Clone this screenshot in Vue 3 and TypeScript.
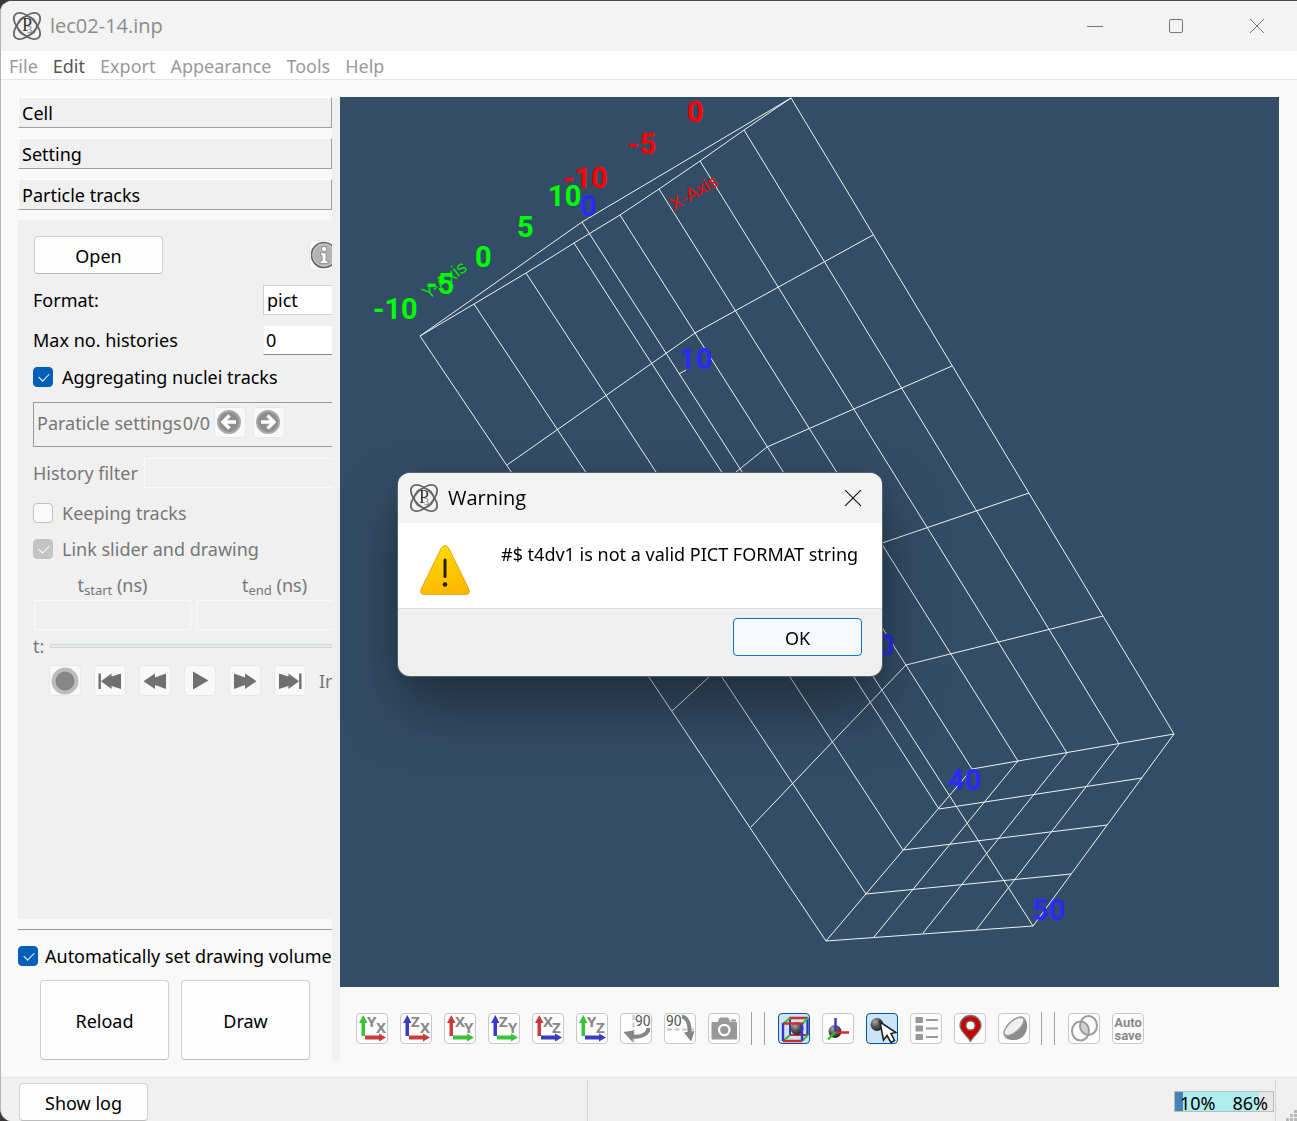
<script setup lang="ts">
import { ref } from 'vue'

interface AxisView { up: string; right: string }
interface Label { text: string; x: number; y: number; kind: 'x' | 'y' | 'z' }

const colors: Record<string, string> = { X: '#c83c3c', Y: '#38c438', Z: '#3a3ac4' }

const menus = ['File', 'Edit', 'Export', 'Appearance', 'Tools', 'Help']
const sections = ['Cell', 'Setting', 'Particle tracks']

const axisViews: AxisView[] = [
  { up: 'Y', right: 'X' },
  { up: 'Z', right: 'X' },
  { up: 'X', right: 'Y' },
  { up: 'Z', right: 'Y' },
  { up: 'X', right: 'Z' },
  { up: 'Y', right: 'Z' },
]

const wireframe: string[] = [
  'M791 98L582 222L420 336',
  'M791 98L744 130L700 161L659 189L620 215L574 243L526 273L474 304L420 336',
  'M791 98L1174 734',
  'M744 130L1119 744',
  'M700 161L1067 753',
  'M659 189L1018 761',
  'M620 215L972 769',
  'M574 243L939 809',
  'M526 273L903 850',
  'M474 304L866 894',
  'M420 336L826 941',
  'M582 222L1033 926',
  'M873 235L695 333L507 465',
  'M952 366L767 447L590 590',
  'M1029 493L838 558L672 711',
  'M1103 616L906 665L751 827',
  'M972 769L1174 734L1033 926L826 941Z',
  'M939 809L1142 778',
  'M903 850L1107 825',
  'M866 894L1071 874',
  'M1018 761L874 937',
  'M1067 753L923 933',
  'M1119 744L976 930',
  'M679 374L686 370',
]

const labels: Label[] = [
  { text: '0', x: 687, y: 122, kind: 'x' },
  { text: '-5', x: 628, y: 154, kind: 'x' },
  { text: '-10', x: 563, y: 188, kind: 'x' },
  { text: '10', x: 548, y: 206, kind: 'y' },
  { text: '5', x: 517, y: 237, kind: 'y' },
  { text: '0', x: 475, y: 267, kind: 'y' },
  { text: '-5', x: 426, y: 294, kind: 'y' },
  { text: '-10', x: 373, y: 319, kind: 'y' },
  { text: '0', x: 580, y: 216, kind: 'z' },
  { text: '10', x: 679, y: 369, kind: 'z' },
  { text: '30', x: 861, y: 655, kind: 'z' },
  { text: '40', x: 948, y: 790, kind: 'z' },
  { text: '50', x: 1032, y: 920, kind: 'z' },
]

const format = ref('pict')
const histories = ref('0')
const aggregating = ref(true)
const keeping = ref(false)
const linked = ref(true)
const autoVolume = ref(true)
const dialogOpen = ref(true)
</script>

<template>
  <div class="window">
    <header class="titlebar">
      <svg class="logo" viewBox="0 0 28 28" aria-hidden="true">
        <g fill="none" stroke="#666" stroke-width="1.8">
          <ellipse cx="14" cy="14" rx="16.4" ry="8.6" transform="rotate(45 14 14)" />
          <ellipse cx="14" cy="14" rx="16.4" ry="8.6" transform="rotate(-45 14 14)" />
          <circle cx="14" cy="14" r="9.6" stroke-width="1.2" />
        </g>
        <text x="9" y="19" class="logo-p">P</text>
        <text x="14" y="21" class="logo-3">3</text>
      </svg>
      <h1 class="title">lec02-14.inp</h1>
      <div class="win-buttons">
        <button type="button" aria-label="Minimize"><svg viewBox="0 0 16 16"><path d="M0 8.5H16" /></svg></button>
        <button type="button" aria-label="Maximize"><svg viewBox="0 0 16 16"><rect x="1.5" y="1.5" width="13" height="13" rx="1.5" /></svg></button>
        <button type="button" aria-label="Close"><svg viewBox="0 0 16 16"><path d="M1 1L15 15M15 1L1 15" /></svg></button>
      </div>
    </header>

    <nav class="menubar">
      <button v-for="m in menus" :key="m" type="button" :class="{ active: m === 'Edit' }">{{ m }}</button>
    </nav>

    <main class="content">
      <aside class="side">
        <div class="sections">
          <button v-for="s in sections" :key="s" type="button" class="section">{{ s }}</button>
        </div>

        <div class="panel">
          <div class="row open-row">
            <button type="button" class="btn">Open</button>
            <button type="button" class="tool info" aria-label="Information">
              <svg viewBox="0 0 28 28">
                <circle cx="13" cy="14" r="12.5" fill="#c9c9c9" stroke="#666" stroke-width="1.6" />
                <circle cx="13" cy="14" r="10.5" fill="#b4b4b4" />
                <circle cx="13" cy="8" r="2.6" fill="#fff" stroke="#777" stroke-width=".7" />
                <path d="M9.500 11.8h5.6v8h2v2.6h-8v-2.6h2v-5.4h-1.6z" fill="#fff" stroke="#777" stroke-width=".7" />
              </svg>
            </button>
          </div>
          <div class="row field">
            <label for="format">Format:</label>
            <select id="format" v-model="format"><option>pict</option></select>
          </div>
          <div class="row field histories">
            <label for="histories">Max no. histories</label>
            <input id="histories" v-model="histories" type="text" />
          </div>
          <label class="row check agg"><input v-model="aggregating" type="checkbox" /><span>Aggregating nuclei tracks</span></label>

          <div class="row particle">
            <span>Paraticle settings</span>
            <span>0/0</span>
            <button type="button" class="tool" aria-label="Previous" disabled>
              <svg viewBox="0 0 28 28"><circle cx="13" cy="13" r="11" fill="#8e8e8e" stroke="#a8a8a8" stroke-width="2" /><path d="M13.5 6.5L7 13l6.500 6.500M7.500 13H20" fill="none" stroke="#fff" stroke-width="3.4" /></svg>
            </button>
            <button type="button" class="tool" aria-label="Next" disabled>
              <svg viewBox="0 0 28 28"><circle cx="13" cy="13" r="11" fill="#8e8e8e" stroke="#a8a8a8" stroke-width="2" /><path d="M12.500 6.500L19 13l-6.500 6.500M18.500 13H6" fill="none" stroke="#fff" stroke-width="3.4" /></svg>
            </button>
          </div>

          <div class="row history">
            <label for="filter">History filter</label>
            <input id="filter" type="text" disabled />
          </div>
          <label class="row check keep off"><input v-model="keeping" type="checkbox" disabled /><span>Keeping tracks</span></label>
          <label class="row check link off"><input v-model="linked" type="checkbox" disabled /><span>Link slider and drawing</span></label>

          <div class="times">
            <div class="time">
              <label for="tstart">t<small>start</small> (ns)</label>
              <input id="tstart" type="text" disabled />
            </div>
            <div class="time">
              <label for="tend">t<small>end</small> (ns)</label>
              <input id="tend" type="text" disabled />
            </div>
          </div>

          <div class="row slider">
            <label for="time">t:</label>
            <input id="time" type="range" min="0" max="100" value="0" disabled />
          </div>

          <div class="row player">
            <button type="button" class="tool" aria-label="Record" disabled><svg viewBox="0 0 28 28"><circle cx="14" cy="14" r="11.500" fill="#868686" stroke="#bdbdbd" stroke-width="4" /></svg></button>
            <button type="button" class="tool" aria-label="First" disabled><svg viewBox="0 0 28 28"><path d="M2.500 6.500h2.400v15.500H2.500zM5 14.200L15.500 6.500v3L25 6.500v15.500l-9.500-3v3z" /></svg></button>
            <button type="button" class="tool" aria-label="Rewind" disabled><svg viewBox="0 0 28 28"><path d="M2.500 14.200L14 6.500v4L25 6.500v15.500l-11-4v4z" /></svg></button>
            <button type="button" class="tool" aria-label="Play" disabled><svg viewBox="0 0 28 28"><path d="M7 4.500L22.500 13.500L7 22.500z" /></svg></button>
            <button type="button" class="tool" aria-label="Forward" disabled><svg viewBox="0 0 28 28"><path d="M25.500 14.200L14 6.500v4L3 6.500v15.500l11-4v4z" /></svg></button>
            <button type="button" class="tool" aria-label="Last" disabled><svg viewBox="0 0 28 28"><path d="M25.500 6.500h-2.400v15.500h2.400zM23 14.200L12.500 6.500v3L3 6.500v15.500l9.500-3v3z" /></svg></button>
            <span class="cut">In</span>
          </div>
        </div>

        <div class="rule"></div>
        <label class="row check auto"><input v-model="autoVolume" type="checkbox" /><span>Automatically set drawing volume</span></label>
        <div class="actions">
          <button type="button" class="btn">Reload</button>
          <button type="button" class="btn">Draw</button>
        </div>
      </aside>
      <div class="splitter"></div>

      <section class="stage">
        <div class="viewport">
          <svg class="scene" viewBox="340 97 939 890" role="img" aria-label="3D view">
            <path v-for="(d, i) in wireframe" :key="i" :d="d" class="wire" />
            <text class="axis" fill="#f00" transform="translate(674 211) rotate(-30)">X-Axis</text>
            <text class="axis" fill="#00e400" transform="translate(428 300) rotate(-37)">Y-Axis</text>
            <text v-for="(l, i) in labels" :key="'l' + i" :x="l.x" :y="l.y" :class="['tick', l.kind]">{{ l.text }}</text>
          </svg>
        </div>

        <div class="toolbar">
          <button v-for="a in axisViews" :key="a.up + a.right" type="button" class="icon" :aria-label="a.up + a.right + ' view'">
            <svg viewBox="0 0 32 32">
              <text x="11" y="14" class="letter">{{ a.up }}</text>
              <text x="20" y="20" class="letter">{{ a.right }}</text>
              <path d="M5.500 23V10H3L7.300 2L11.500 10H9V23z" :fill="colors[a.up]" />
              <path d="M9 22.500H23V20.500L30 24.500L23 28.500V26.500H9z" :fill="colors[a.right]" />
            </svg>
          </button>
          <button type="button" class="icon" aria-label="Rotate left 90">
            <svg viewBox="0 0 32 32">
              <path d="M13.500 2V30" stroke="#c4c4c4" stroke-width="2" stroke-dasharray="5 2.500" />
              <text x="15" y="13" class="ninety">90</text>
              <path d="M28 15c1 6-8 10-16 8.500" fill="none" stroke="#858585" stroke-width="4" />
              <path d="M3.500 19L14 17.500L12.500 29z" fill="#858585" />
            </svg>
          </button>
          <button type="button" class="icon" aria-label="Rotate down 90">
            <svg viewBox="0 0 32 32">
              <path d="M3 16.500H30" stroke="#c4c4c4" stroke-width="2" stroke-dasharray="5 2.500" />
              <text x="2" y="13" class="ninety">90</text>
              <path d="M18 3.500c6 1 8 9 7.500 17" fill="none" stroke="#858585" stroke-width="4" />
              <path d="M20 19.500L30.500 18L27 28.500z" fill="#858585" />
            </svg>
          </button>
          <button type="button" class="icon" aria-label="Capture">
            <svg viewBox="0 0 32 32">
              <path d="M4 9.500h6l2-4.500h8l2 4.500h6.500V26H4z" fill="#999" stroke="#999" stroke-linejoin="round" />
              <path d="M23 7.500h5" stroke="#999" stroke-width="2" />
              <circle cx="16.300" cy="17" r="5.200" fill="#999" stroke="#fff" stroke-width="2.200" />
            </svg>
          </button>
          <span class="bars"></span>
          <button type="button" class="icon on" aria-label="Bounding box">
            <svg viewBox="0 0 32 32" fill="none">
              <defs>
                <radialGradient id="ball" cx=".35" cy=".3" r=".75"><stop offset="0" stop-color="#aaa" /><stop offset=".5" stop-color="#555" /><stop offset="1" stop-color="#222" /></radialGradient>
              </defs>
              <path d="M12 22H29" stroke="#d42a2a" stroke-width="2" />
              <path d="M12 5V22" stroke="#3a32d0" stroke-width="2" />
              <circle cx="19" cy="15.500" r="6.500" fill="url(#ball)" />
              <path d="M11 5H30" stroke="#d42a2a" stroke-width="2.400" />
              <path d="M29.500 5V22" stroke="#3a32d0" stroke-width="2.400" />
              <path d="M5 11L12 5M24 11L30 5M5 28L12 22M24 28L30 22" stroke="#2cc42c" stroke-width="2" />
              <path d="M5 10V28M24 10V28" stroke="#3a32d0" stroke-width="2.400" />
              <path d="M5 10.500H24M5 28H24" stroke="#d42a2a" stroke-width="2.400" />
            </svg>
          </button>
          <button type="button" class="icon" aria-label="Axes">
            <svg viewBox="0 0 32 32" fill="none">
              <circle cx="13" cy="18.500" r="6.500" fill="url(#ball)" />
              <path d="M13.500 19V5" stroke="#3a32d0" stroke-width="2.400" />
              <path d="M13.500 19.500H27" stroke="#d42a2a" stroke-width="2.400" />
              <path d="M13.500 19L6 26.500" stroke="#2cc42c" stroke-width="2.400" />
            </svg>
          </button>
          <button type="button" class="icon on" aria-label="Pick">
            <svg viewBox="0 0 32 32">
              <circle cx="11" cy="11.500" r="6.500" fill="url(#ball)" />
              <path d="M14 9L17.500 27L21 22.500L25 29.500L28.500 27.500L25 20.500L30 19.500z" fill="#fff" stroke="#222" stroke-width="1.600" />
            </svg>
          </button>
          <button type="button" class="icon" aria-label="Legend">
            <svg viewBox="0 0 32 32">
              <path d="M5.500 4h7.500v6H5.500zM5.500 12.500h7.500v6H5.500zM5.500 21h7.500v6H5.500z" fill="#999" />
              <path d="M16 7H28M16 15.500H28M16 24H28" stroke="#999" stroke-width="1.800" />
            </svg>
          </button>
          <button type="button" class="icon" aria-label="Marker">
            <svg viewBox="0 0 32 32">
              <path d="M16.500 28.500C13 22 6 18.500 6 12.500A10.500 10 0 0 1 27 12.500C27 18.500 20 22 16.500 28.500z" fill="#c80000" stroke="#777" stroke-width="1.300" />
              <circle cx="16.500" cy="12.500" r="4.500" fill="#fff" stroke="#777" stroke-width="1.300" />
            </svg>
          </button>
          <button type="button" class="icon" aria-label="Clip">
            <svg viewBox="0 0 32 32">
              <path d="M26 4.500C32.500 11 29 27 16 27C10 27 6 25 6 21z" fill="#8c8c8c" />
              <ellipse cx="16" cy="13.500" rx="12.500" ry="5.500" transform="rotate(-42 16 13.500)" fill="#f0f0f0" stroke="#9a9a9a" stroke-width="1.600" />
            </svg>
          </button>
          <span class="bars"></span>
          <button type="button" class="icon" aria-label="Overlap">
            <svg viewBox="0 0 32 32" fill="none" stroke="#9c9c9c" stroke-width="2">
              <path d="M12.500 9C16 7.500 20 11 21 15C21.500 18 21 20 20 21.500C16 22 13 19 12 15C11.500 12 11.800 10.500 12.500 9z" fill="#d2d2d2" stroke="none" />
              <ellipse cx="12.500" cy="18" rx="8.500" ry="9.500" />
              <ellipse cx="20.500" cy="12.500" rx="8.500" ry="9.500" />
            </svg>
          </button>
          <button type="button" class="icon" aria-label="Auto save">
            <svg viewBox="0 0 32 32">
              <text x="16" y="14" class="auto-text" text-anchor="middle">Auto</text>
              <text x="16" y="27" class="auto-text" text-anchor="middle">save</text>
            </svg>
          </button>
        </div>
      </section>
    </main>

    <footer class="status">
      <button type="button" class="btn">Show log</button>
      <div class="status-left"></div>
      <div class="status-right">
        <div class="meter"><span>10%</span><span>86%</span></div>
      </div>
      <svg class="grip" viewBox="0 0 12 12" fill="#b8b8b8" aria-hidden="true"><path d="M9 1h3v3h-3zM5 5h3v3h-3zM9 5h3v3h-3zM1 9h3v3h-3zM5 9h3v3h-3zM9 9h3v3h-3z" /></svg>
    </footer>

    <div v-if="dialogOpen" class="overlay">
      <div class="dialog" role="alertdialog" aria-labelledby="dlg-title" aria-describedby="dlg-text">
        <header class="dialog-head">
          <svg class="logo" viewBox="0 0 28 28" aria-hidden="true">
            <g fill="none" stroke="#666" stroke-width="1.8">
              <ellipse cx="14" cy="14" rx="16.4" ry="8.6" transform="rotate(45 14 14)" />
              <ellipse cx="14" cy="14" rx="16.4" ry="8.6" transform="rotate(-45 14 14)" />
              <circle cx="14" cy="14" r="9.6" stroke-width="1.2" />
            </g>
            <text x="9" y="19" class="logo-p">P</text>
            <text x="14" y="21" class="logo-3">3</text>
          </svg>
          <h2 id="dlg-title">Warning</h2>
          <button type="button" aria-label="Close dialog" @click="dialogOpen = false">
            <svg viewBox="0 0 16 16"><path d="M1 1L15 15M15 1L1 15" /></svg>
          </button>
        </header>
        <div class="dialog-body">
          <svg class="warn" viewBox="0 0 50 50" aria-hidden="true">
            <defs><linearGradient id="amber" x1="0" y1="0" x2=".3" y2="1"><stop offset="0" stop-color="#ffe000" /><stop offset="1" stop-color="#ffb900" /></linearGradient></defs>
            <path d="M21.500 2.800Q25-1.500 28.500 2.800L48.800 44Q50.500 49 46 49.300H4Q-.5 49 1.200 44z" fill="url(#amber)" stroke="#eda200" />
            <path d="M25 15V31.500" stroke="#222" stroke-width="3" stroke-linecap="round" />
            <circle cx="25" cy="39.500" r="2.300" fill="#222" />
          </svg>
          <p id="dlg-text">#$ t4dv1 is not a valid PICT FORMAT string</p>
        </div>
        <div class="dialog-foot">
          <button type="button" class="btn primary" @click="dialogOpen = false">OK</button>
        </div>
      </div>
    </div>
  </div>
</template>

<style>
body { background: #3a3638; }
</style>

<style scoped>
* { box-sizing: border-box; }
.window {
  position: relative;
  display: flex;
  flex-direction: column;
  min-height: 100vh;
  overflow: hidden;
  border-top: 1px solid #4a4a4a;
  border-left: 1px solid #b5b5b5;
  border-radius: 12px 0 0 12px;
  background: #f9f9f9;
  color: #000;
  font: 18px/24px "Noto Sans", "Open Sans", sans-serif;
}
button, input, select { font: inherit; color: inherit; margin: 0; }
button { padding: 0; border: 0; background: none; }
svg { display: block; }
.titlebar { display: flex; align-items: center; height: 50px; padding-left: 12px; background: #f3f3f3; color: #8c8c8c; }
.logo { width: 28px; height: 28px; flex: none; overflow: visible; }
.logo-p { font: 18px "Liberation Serif", serif; fill: #333; }
.logo-3 { font: 10px "Liberation Serif", serif; fill: #777; }
.title { flex: 1; margin: 0 0 0 9px; font: 20px/28px "Open Sans", sans-serif; }
.win-buttons { display: flex; }
.win-buttons button { display: grid; place-items: center; width: 81px; height: 50px; }
.win-buttons svg { width: 16px; height: 16px; fill: none; stroke: #777; }
.menubar { display: flex; gap: 15px; height: 29px; padding: 1px 0 0 8px; background: #fff; border-bottom: 1px solid #e5e5e5; color: #999; }
.menubar .active { color: #555; }

.content { flex: 1; display: flex; padding: 17px 18px 17px 17px; }
.side { display: flex; flex-direction: column; flex: none; width: 314px; }
.sections { display: flex; flex-direction: column; gap: 10px; }
.section { height: 31px; padding-left: 3px; text-align: left; background: #f0f0f0; border: 1px solid #a0a0a0; border-top-color: #fff; border-left-color: #fff; }
.panel { flex: 1; margin-top: 10px; padding: 16px 0 16px 15px; overflow: hidden; background: #f0f0f0; }
.row { display: flex; align-items: center; }
.btn { width: 129px; height: 38px; padding-top: 2px; background: #fdfdfd; border: 1px solid #d0d0d0; border-bottom-color: #bcbcbc; border-radius: 4px; }
.tool { display: grid; place-items: center; flex: none; width: 32px; height: 31px; background: #f9f9f9; border: 1px solid #e8e8e8; border-radius: 4px; }
.tool svg { width: 28px; height: 28px; fill: #707070; }
.open-row { justify-content: space-between; padding-left: 1px; }
.info { margin-right: -9px; }
.field { justify-content: space-between; height: 30px; margin-top: 11px; }
.field select, .field input { width: 69px; height: 30px; padding: 0 3px; appearance: none; background: #fff; border: 1px solid #d0d0d0; border-right: 0; border-radius: 0; }
.histories { margin-top: 10px; }
.field input { padding: 0 2px; border-color: #f0f0f0; border-bottom-color: #868686; }
.check { gap: 9px; height: 20px; white-space: nowrap; }
.check input { position: relative; appearance: none; width: 20px; height: 20px; flex: none; border: 1px solid #c0c0c0; border-radius: 4px; background: #fafafa; }
.check input:checked { background: #005fb8; border-color: #005fb8; }
.check input:checked::after { content: ""; position: absolute; left: 5px; top: 5px; width: 9px; height: 5px; border: solid #fff; border-width: 0 0 1px 1px; transform: rotate(-45deg); }
.off, .particle, .history, .times, .slider, .player { color: #777; }
.off input:checked { background: #c3c3c3; border-color: #c3c3c3; }
.agg { margin-top: 12px; }
.particle { height: 45px; margin-top: 15px; padding-left: 3px; padding-bottom: 4px; border: 1px solid #999; border-right: 0; white-space: nowrap; }
.particle span + span { margin: 0 4px 0 1px; }
.particle .tool + .tool { margin-left: 7px; }
.history { height: 30px; margin-top: 11px; gap: 6px; white-space: nowrap; }
.history input, .time input { width: 100%; min-width: 0; height: 30px; background: #f0f0f0; border: 1px solid #fafafa; border-radius: 0; }
.history input, .time:last-child input { border-right: 0; }
.keep { margin-top: 15px; }
.link { margin-top: 16px; }
.times { display: flex; gap: 5px; margin-top: 14px; padding-left: 1px; }
.time { display: flex; flex-direction: column; gap: 3px; width: 157px; flex: none; text-align: center; line-height: 24px; }
.time small { font-size: 13px; line-height: 1px; vertical-align: -3px; }
.slider { gap: 6px; height: 20px; margin-top: 6px; }
.slider input { flex: 1; min-width: 0; height: 4px; appearance: none; background: #e6eaea; border: 1px solid #d2d6d6; border-right: 0; }
.slider input::-webkit-slider-thumb { appearance: none; width: 0; height: 0; }
.player { gap: 13px; margin-top: 9px; padding-left: 16px; }
.cut { width: 14px; overflow: hidden; white-space: nowrap; }
.rule { margin-top: 10px; border-top: 1px solid #999; }
.auto { gap: 7px; margin-top: 16px; }
.actions { display: flex; gap: 12px; margin-top: 14px; padding-left: 22px; }
.actions .btn { height: 80px; }
.splitter { flex: none; width: 8px; background: #f0f0f0; }

.stage { flex: 1; min-width: 0; display: flex; flex-direction: column; }
.viewport { flex: 1; display: flex; min-height: 0; background: #334d66; }
.scene { flex: 1; width: 100%; min-width: 0; }
.wire { fill: none; stroke: #eef2f5; stroke-width: 1; }
.axis { font: 18px "Liberation Sans", sans-serif; }
.tick { font: bold 29px Roboto, sans-serif; }
.tick.x { fill: #f00; }
.tick.y { fill: #0f0; }
.tick.z { fill: #2a2aff; }
.toolbar { display: flex; align-items: center; gap: 12px; padding: 25px 16px 15px; }
.icon { width: 32px; height: 31px; flex: none; overflow: hidden; background: #fdfdfd; border: 1px solid #c8c8c8; border-radius: 4px; }
.icon svg { width: 32px; height: 32px; margin: -1px; }
.icon.on { background: #cce4f7; border-color: #00549a; }
.letter { font: bold 15px "Noto Sans", sans-serif; fill: #888; }
.ninety { font: 14px Roboto, sans-serif; fill: #555; }
.auto-text { font: bold 13px Roboto, sans-serif; fill: #888; }
.bars { width: 14px; height: 33px; margin: 0 1px 0 -1px; border: solid #a0a0a0; border-width: 0 1px; }

.status { display: flex; align-items: stretch; height: 44px; padding-left: 18px; background: #f0f0f0; border-top: 1px solid #e5e5e5; }
.status > .btn { margin-top: 5px; }
.status-left { width: 440px; margin-top: 3px; border-right: 1px solid #d4d4d4; }
.status-right { flex: 1; display: flex; justify-content: flex-end; align-items: center; margin-top: 3px; padding: 1px 1px 0 0; border-right: 1px solid #d4d4d4; }
.meter { display: flex; justify-content: space-between; align-items: center; width: 100px; height: 21px; padding: 2px 5px 0; border: 1px solid #bbb; background: linear-gradient(90deg, #4682b4 8%, #afeeee 8% 86%, #e6e6e6 86%); }
.grip { align-self: flex-end; width: 12px; height: 12px; margin-left: 9px; }

.overlay { position: fixed; inset: 0; display: flex; align-items: center; justify-content: center; padding: 28px 17px 0 0; }
.dialog { width: 484px; overflow: hidden; border-radius: 12px; background: #f0f0f0; box-shadow: 0 0 0 1px #53636c, 0 32px 64px rgba(0, 0, 0, .4), 0 2px 20px rgba(0, 0, 0, .1); }
.dialog-head { display: flex; align-items: center; height: 50px; padding: 0 20px 0 12px; background: #f3f3f3; }
.dialog-head h2 { flex: 1; margin: 0 0 0 10px; font: 20px/28px "Open Sans", sans-serif; }
.dialog-head button svg { width: 18px; height: 18px; fill: none; stroke: #111; stroke-width: 1; }
.dialog-body { display: flex; gap: 31px; height: 86px; padding: 22px 20px 0 22px; background: #fff; border-bottom: 1px solid #dfdfdf; }
.dialog-body p { margin: -3px 0 0; white-space: nowrap; }
.warn { width: 50px; height: 50px; flex: none; }
.dialog-foot { display: flex; justify-content: flex-end; padding: 9px 20px 20px; }
.primary { background: #f5f9fd; border-color: #0078d4; }
</style>
